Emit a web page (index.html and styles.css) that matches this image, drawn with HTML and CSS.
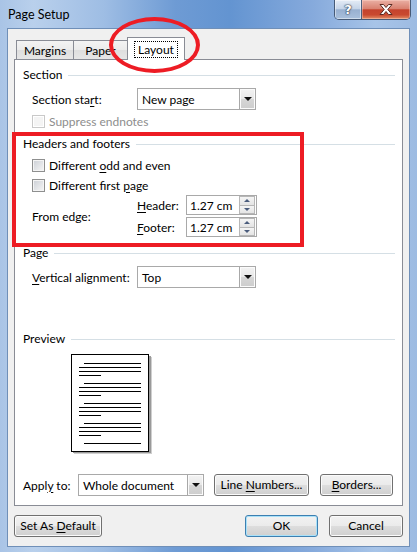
FILE: index.html
```html
<!DOCTYPE html>
<html>
<head>
<meta charset="utf-8">
<title>Page Setup</title>
<link rel="stylesheet" href="styles.css">
</head>
<body>
<div class="window">
  <div class="titlebar">
    <span class="title">Page Setup</span>
    <div class="caption">
      <div class="cap help"><span>?</span></div>
      <div class="cap close">
        <svg width="14" height="11" viewBox="0 0 14 11"><path d="M1 0.5h3.5l2.5 3 2.5-3h3.5l-4.2 5 4.2 5h-3.5l-2.5-3-2.5 3h-3.5l4.2-5z" fill="#fff" stroke="#5a2a22" stroke-width="1" stroke-linejoin="round"/></svg>
      </div>
    </div>
  </div>
  <div class="client">
    <div class="tabs">
      <div class="tab">Margins</div>
      <div class="tab paper">Paper</div>
      <div class="tab active"><span class="focus">Layout</span></div>
    </div>
    <div class="panel">
      <div class="group-head"><span>Section</span></div>
      <div class="row r-start">
        <span class="label">Section sta<u>r</u>t:</span>
        <div class="combo w119"><span class="val">New page</span><span class="drop"><i></i></span></div>
      </div>
      <div class="check-row r-suppress disabled">
        <span class="box"></span><span>Suppress endnotes</span>
      </div>

      <div class="group-head g-hf"><span>Headers and footers</span></div>
      <div class="check-row r-odd"><span class="box"></span><span>Different <u>o</u>dd and even</span></div>
      <div class="check-row r-first"><span class="box"></span><span>Different first <u>p</u>age</span></div>
      <div class="edge">
        <span class="label">From edge:</span>
        <div class="edge-fields">
          <div class="field-row">
            <span class="flabel"><u>H</u>eader:</span>
            <div class="spin"><span class="val">1.27 cm</span><span class="spin-btns"><span class="up"><i></i></span><span class="down"><i></i></span></span></div>
          </div>
          <div class="field-row">
            <span class="flabel"><u>F</u>ooter:</span>
            <div class="spin"><span class="val">1.27 cm</span><span class="spin-btns"><span class="up"><i></i></span><span class="down"><i></i></span></span></div>
          </div>
        </div>
      </div>

      <div class="group-head g-page"><span>Page</span></div>
      <div class="row r-va">
        <span class="label"><u>V</u>ertical alignment:</span>
        <div class="combo w119"><span class="val">Top</span><span class="drop"><i></i></span></div>
      </div>

      <div class="group-head g-preview"><span>Preview</span></div>
      <div class="preview">
        <svg width="82" height="101" viewBox="0 0 82 101">
          <rect x="3" y="3" width="78" height="97" fill="#cfcfcf"/>
          <rect x="2" y="2" width="78" height="97" fill="#9a9a9a"/>
          <rect x="0.5" y="0.5" width="77" height="97" fill="#fff" stroke="#000"/>
          <g stroke="#000" stroke-width="1">
            <path d="M13 9.5H70M8 13.5H70M8 17.5H70M8 21.5H30"/>
            <path d="M13 29.5H70M8 33.5H70M8 37.5H70M8 41.5H30"/>
            <path d="M13 49.5H70M8 53.5H70M8 57.5H70M8 61.5H30"/>
            <path d="M13 69.5H70M8 73.5H70M8 77.5H70M8 81.5H30"/>
            <path d="M13 89.5H70"/>
          </g>
        </svg>
      </div>

      <div class="apply">
        <span class="alabel">Appl<u>y</u> to:</span>
        <div class="combo w126"><span class="val">Whole document</span><span class="drop"><i></i></span></div>
        <button class="btn b-line"><span>Line <u>N</u>umbers...</span></button>
        <button class="btn b-borders"><span><u>B</u>orders...</span></button>
      </div>
    </div>
    <div class="bottom">
      <button class="btn b-default"><span>Set As <u>D</u>efault</span></button>
      <button class="btn b-ok primary"><span>OK</span></button>
      <button class="btn b-cancel"><span>Cancel</span></button>
    </div>
  </div>
  <div class="annot-ellipse"></div>
  <div class="annot-rect"></div>
</div>
</body>
</html>
```

FILE: styles.css
```css
* { box-sizing: border-box; }
html, body { margin: 0; padding: 0; }
body {
  width: 417px;
  height: 552px;
  overflow: hidden;
  font-family: Lato, "Noto Sans", sans-serif;
  font-size: 12px;
  color: #000;
  background: #fff;
}
u { text-decoration: underline; text-underline-offset: 2px; }

.window {
  position: relative;
  width: 417px;
  height: 552px;
  display: flex;
  flex-direction: column;
  padding: 0 7px 5px 7px;
  background: linear-gradient(90deg, #a9c4e6 0%, #b9d0ec 8%, #9ebde4 25%, #6e9bd4 42%, #6394d1 55%, #86aadc 75%, #a7c4e8 90%, #9dbbe2 100%);
}

.titlebar {
  height: 28px;
  display: flex;
  align-items: flex-start;
  margin: 0 -7px;
  padding-left: 8px;
}
.title {
  margin-top: 7px;
  line-height: 16px;
  font-size: 12.5px;
  color: #000;
}
.caption {
  margin-left: auto;
  margin-right: 6px;
  display: flex;
  height: 20px;
  border: 1px solid #465a76;
  border-top: none;
  border-radius: 0 0 5px 5px;
  overflow: hidden;
}
.cap {
  height: 19px;
  display: flex;
  align-items: center;
  justify-content: center;
}
.help {
  width: 27px;
  border-right: 1px solid #4d607c;
  background: linear-gradient(#e4ecf6 0%, #c6d5e8 45%, #98b0d0 52%, #a9c0dc 100%);
  box-shadow: inset 0 0 0 1px rgba(255,255,255,0.45);
}
.help span {
  font-family: "DejaVu Sans", sans-serif;
  font-weight: bold;
  font-size: 13px;
  color: #fff;
  text-shadow: 0 0 1px #2c3b52, 0 0 1px #2c3b52, 0 0 2px #2c3b52;
  line-height: 13px;
}
.close {
  width: 48px;
  background: linear-gradient(#eab0a4 0%, #d98271 45%, #c4432d 52%, #c9492f 78%, #e28f67 100%);
  box-shadow: inset 0 0 0 1px rgba(255,220,210,0.4);
}

.client {
  flex: 1;
  background: #f0f0f0;
  border: 1px solid #6f8fb8;
  padding: 8px 6px 0 6px;
  display: flex;
  flex-direction: column;
}

.tabs {
  height: 22px;
  display: flex;
  align-items: flex-end;
  padding-left: 2px;
}
.tab {
  height: 19px;
  border: 1px solid #898c95;
  border-bottom: none;
  background: linear-gradient(#f3f3f3, #ebebeb 50%, #dedede 51%, #e6e6e6);
  display: flex;
  align-items: center;
  justify-content: center;
  line-height: 15px;
  width: 58px;
}
.tab.paper { width: 55px; margin-left: -1px; }
.tab.active {
  position: relative;
  z-index: 1;
  height: 23px;
  width: 58px;
  margin-left: -1px;
  margin-bottom: -1px;
  background: #fff;
  align-items: flex-start;
  padding-top: 3px;
}
.focus {
  border: 1px dotted #000;
  padding: 0 3px;
  line-height: 14px;
  height: 17px;
  display: flex;
  align-items: center;
}

.panel {
  height: 447px;
  border: 1px solid #898c95;
  background: #fff;
  padding: 7px 7px 0 8px;
  display: flex;
  flex-direction: column;
}

.group-head {
  height: 16px;
  display: flex;
  align-items: center;
  line-height: 16px;
  white-space: nowrap;
}
.group-head::after {
  content: "";
  flex: 1;
  height: 1px;
  background: #d5dfe5;
  margin-left: 6px;
}
.g-hf { margin-top: 7px; }
.g-page { margin-top: 8px; }
.g-preview { margin-top: 43px; }

.row {
  display: flex;
  align-items: center;
  height: 22px;
  padding-left: 9px;
  white-space: nowrap;
}
.r-start { margin-top: 5px; }
.r-va { margin-top: 5px; }
.label { width: 105px; flex: none; white-space: nowrap; }

.combo {
  height: 22px;
  border: 1px solid #a9a9a9;
  background: #fff;
  display: flex;
  align-items: center;
  padding-left: 4px;
  position: relative;
  white-space: nowrap;
}
.w119 { width: 119px; }
.w126 { width: 126px; }
.combo .val { flex: 1; }
.drop {
  width: 16px;
  height: 20px;
  border-left: 1px solid #a8a8a8;
  background: linear-gradient(#f3f3f3, #e8e8e8 50%, #d6d6d6 51%, #cdcdcd);
  display: flex;
  align-items: center;
  justify-content: center;
  box-shadow: inset 0 0 0 1px #fbfbfb;
}
.drop i {
  width: 0;
  height: 0;
  border-left: 4px solid transparent;
  border-right: 4px solid transparent;
  border-top: 4px solid #111;
}

.check-row {
  display: flex;
  align-items: center;
  height: 16px;
  padding-left: 9px;
  white-space: nowrap;
}
.r-suppress { margin-top: 3px; }
.r-odd { margin-top: 5px; }
.r-first { margin-top: 4px; }
.box {
  width: 13px;
  height: 13px;
  flex: none;
  border: 1px solid #8e8f8f;
  background: linear-gradient(135deg, #cbcfd5, #f6f6f6);
  box-shadow: inset 0 0 0 1px #f4f4f4;
  margin-right: 4px;
}
.disabled { color: #8d8d8d; }
.disabled .box {
  border-color: #c9c9c9;
  background: #f4f4f4;
  box-shadow: inset 0 0 0 1px #fff;
}

.edge {
  display: flex;
  align-items: center;
  padding-left: 9px;
  margin-top: 2px;
}
.edge-fields {
  display: flex;
  flex-direction: column;
  gap: 2px;
}
.field-row {
  display: flex;
  align-items: center;
  height: 20px;
  white-space: nowrap;
}
.flabel { width: 49px; }
.spin {
  width: 71px;
  height: 20px;
  border: 1px solid #a9a9a9;
  background: #fff;
  display: flex;
  align-items: center;
  padding-left: 3px;
}
.spin .val { flex: 1; }
.spin-btns {
  width: 16px;
  height: 18px;
  margin-right: 1px;
  display: flex;
  flex-direction: column;
}
.spin-btns span {
  flex: 1;
  border: 1px solid #b7b7b7;
  background: linear-gradient(#f5f5f5, #e4e4e4);
  display: flex;
  align-items: center;
  justify-content: center;
}
.spin-btns .down { border-top: none; }
.spin-btns .up i {
  width: 0; height: 0;
  border-left: 3px solid transparent;
  border-right: 3px solid transparent;
  border-bottom: 3px solid #4a5c7c;
}
.spin-btns .down i {
  width: 0; height: 0;
  border-left: 3px solid transparent;
  border-right: 3px solid transparent;
  border-top: 3px solid #4a5c7c;
}

.preview {
  margin-top: 7px;
  margin-left: 48px;
  height: 101px;
}
.preview svg { display: block; }

.apply {
  margin-top: 19px;
  display: flex;
  align-items: center;
  height: 22px;
  white-space: nowrap;
}
.alabel { width: 55px; flex: none; }
.apply .combo { margin-right: 10px; }

.btn {
  font: inherit;
  color: #000;
  height: 22px;
  border: 1px solid #707070;
  border-radius: 3px;
  background: linear-gradient(#f2f2f2 0%, #ebebeb 48%, #dddddd 52%, #cfcfcf 100%);
  box-shadow: inset 0 0 0 1px #fbfbfb;
  padding: 0;
  display: flex;
  align-items: center;
  justify-content: center;
  line-height: 16px;
  white-space: nowrap;
}
.b-line { width: 95px; }
.b-borders { width: 73px; margin-left: 11px; }

.bottom {
  margin-top: 9px;
  display: flex;
  height: 22px;
}
.b-default { width: 88px; }
.b-ok { width: 73px; margin-left: auto; }
.b-cancel { width: 74px; margin-left: 11px; }
.primary {
  border-color: #3c7fb1;
  box-shadow: inset 0 0 0 1px #a9e1f9;
}

.annot-ellipse {
  position: absolute;
  left: 109px;
  top: 17px;
  width: 91px;
  height: 56px;
  border: 4px solid #ed1c24;
  border-radius: 50%;
  pointer-events: none;
}
.annot-rect {
  position: absolute;
  left: 12px;
  top: 132px;
  width: 292px;
  height: 115px;
  border: 4px solid #ed1c24;
  pointer-events: none;
}
```
